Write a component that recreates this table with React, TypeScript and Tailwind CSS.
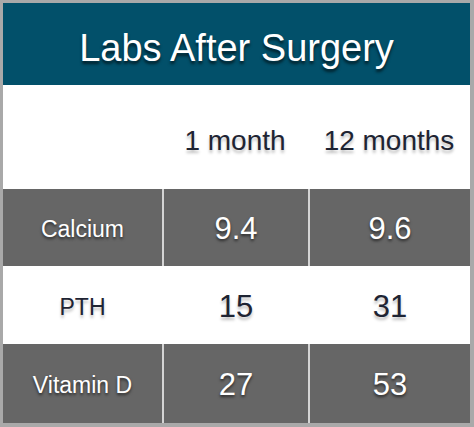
import React from 'react';

type Row = { label: string; oneMonth: string; twelveMonths: string; shaded: boolean };

const rows: Row[] = [
  { label: 'Calcium', oneMonth: '9.4', twelveMonths: '9.6', shaded: true },
  { label: 'PTH', oneMonth: '15', twelveMonths: '31', shaded: false },
  { label: 'Vitamin D', oneMonth: '27', twelveMonths: '53', shaded: true },
];

// Row of the lab table
function LabRow({ row, height }: { row: Row; height: string }) {
  const cell = row.shaded
    ? 'bg-[#666666] text-white [text-shadow:0_2px_3px_rgba(0,0,0,0.6)]'
    : 'bg-white text-[#1e2433] [text-shadow:0_3px_3px_rgba(0,0,0,0.25)]';
  const sep = row.shaded ? 'border-l-2 border-[#d4d4d4]' : 'border-l-2 border-white';

  return (
    <div className={`grid grid-cols-[159px_146px_162px] ${height}`}>
      <div className={`flex items-center justify-center pt-1 text-[23px] ${cell}`}>{row.label}</div>
      <div className={`flex items-center justify-center pt-1 text-[31px] ${cell} ${sep}`}>{row.oneMonth}</div>
      <div className={`flex items-center justify-center pt-1 text-[31px] ${cell} ${sep}`}>{row.twelveMonths}</div>
    </div>
  );
}

export default function App() {
  return (
    <div className="w-[474px] h-[427px] bg-white font-['Liberation_Sans',Arial,sans-serif]">
      <div className="flex flex-col h-full border-t-[3px] border-l-[3px] border-r-[4px] border-b-[4px] border-[#a9a9a9]">
        <div className="h-[82px] bg-[#02506a] flex items-center justify-center pt-2 text-white text-[38px] [text-shadow:0_3px_3px_rgba(0,0,0,0.6)]">
          Labs After Surgery
        </div>
        <div className="grid grid-cols-[159px_146px_162px] h-[104px] text-[28px] text-[#1e2433] [text-shadow:0_3px_3px_rgba(0,0,0,0.25)]">
          <div />
          <div className="flex items-center justify-center pt-2">1 month</div>
          <div className="flex items-center justify-center pt-2">12 months</div>
        </div>
        <LabRow row={rows[0]} height="h-[77px]" />
        <LabRow row={rows[1]} height="h-[78px]" />
        <LabRow row={rows[2]} height="flex-1" />
      </div>
    </div>
  );
}
